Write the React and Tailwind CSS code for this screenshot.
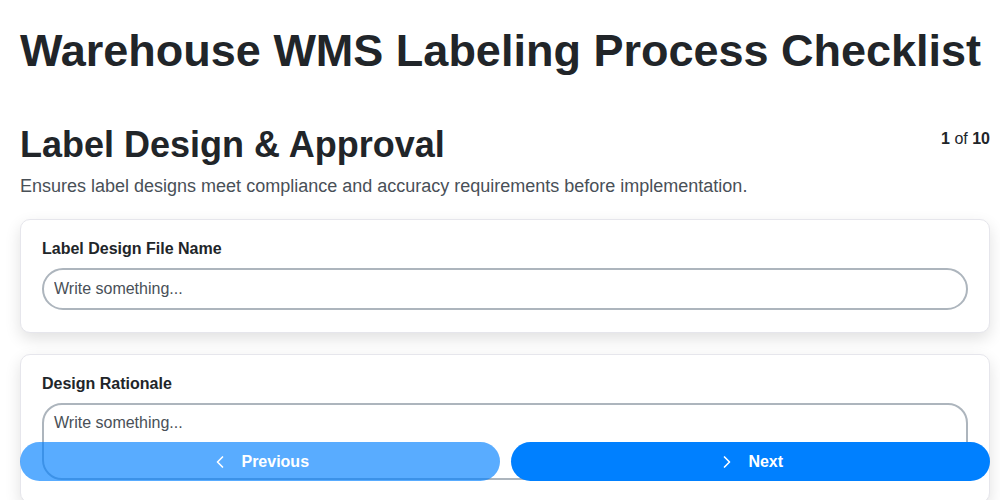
import React from 'react';
import { ChevronLeft, ChevronRight } from 'lucide-react';

const Field = ({ label, multiline }) => (
  <div className="bg-white border border-[#e6e6ec] rounded-[10px] shadow-[0_6px_16px_rgba(0,0,0,0.12)] px-[21px] pt-[19px] pb-[22px]">
    <label className="block text-[16px] leading-[20px] font-bold text-[#212529] mb-[9px]">{label}</label>
    {multiline ? (
      <textarea
        rows={3}
        placeholder="Write something..."
        className="block w-full h-[77px] resize-none border-2 border-[#adb5bd] rounded-[20px] px-[10px] pt-[8px] text-[16px] leading-[20px] text-[#212529] placeholder:text-[#495057] outline-none"
      />
    ) : (
      <input
        type="text"
        placeholder="Write something..."
        className="block w-full h-[42px] border-2 border-[#adb5bd] rounded-full px-[10px] text-[16px] text-[#212529] placeholder:text-[#495057] outline-none"
      />
    )}
  </div>
);

export default function App() {
  return (
    <div className="min-h-screen bg-white font-['Liberation_Sans',Arial,sans-serif] pl-[20px] pr-[10px] pt-[27px] pb-[80px]">
      <h1 className="text-[45px] leading-[48px] font-bold text-[#212529] whitespace-nowrap">Warehouse WMS Labeling Process Checklist</h1>

      <div className="flex items-start justify-between mt-[50px]">
        <h2 className="text-[36px] leading-[40px] font-bold text-[#212529]">Label Design &amp; Approval</h2>
        <div className="text-[16px] leading-[24px] text-[#212529] pt-[2px]">
          <span className="font-bold">1</span> of <span className="font-bold">10</span>
        </div>
      </div>
      <p className="text-[18px] leading-[24px] text-[#495057] mt-[9px]">
        Ensures label designs meet compliance and accuracy requirements before implementation.
      </p>

      <div className="flex flex-col gap-[21px] mt-[21px]">
        <Field label="Label Design File Name" />
        <Field label="Design Rationale" multiline />
      </div>

      <div className="fixed left-[20px] right-[10px] bottom-[19px] flex gap-[11px]">
        <button className="flex-1 h-[39px] rounded-full bg-[#0080ff] opacity-65 text-white text-[16px] font-bold flex items-center justify-center gap-[11px]">
          <ChevronLeft size={20} strokeWidth={2} />
          Previous
        </button>
        <button className="flex-1 h-[39px] rounded-full bg-[#0080ff] text-white text-[16px] font-bold flex items-center justify-center gap-[11px]">
          <ChevronRight size={20} strokeWidth={2} />
          Next
        </button>
      </div>
    </div>
  );
}
